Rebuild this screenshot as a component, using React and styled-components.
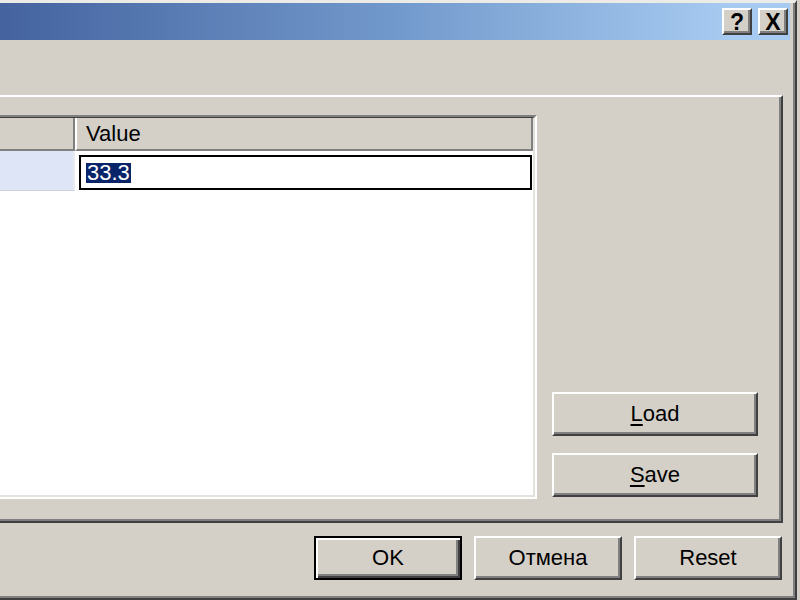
import React from "react";
import styled, { createGlobalStyle } from "styled-components";

const GlobalStyle = createGlobalStyle`
  html, body {
    margin: 0;
    padding: 0;
    background: #d4d0c8;
    overflow: hidden;
  }
  * { box-sizing: border-box; }
`;

const Window = styled.div`
  width: 797px;
  height: 600px;
  background: #d4d0c8;
  border-top: 3px solid #ecebe6;
  border-right: 2px solid #404040;
  border-bottom: 2px solid #404040;
  box-shadow: inset -2px -2px #808080;
  display: flex;
  flex-direction: column;
  font-family: "Liberation Sans", Arial, sans-serif;
  font-size: 22px;
  color: #000;
  overflow: hidden;
`;

const TitleBar = styled.div`
  height: 37px;
  margin-right: 5px;
  padding-right: 2px;
  background: linear-gradient(to right, #44639f 0%, #7299cc 50%, #a6caf0 92%);
  display: flex;
  align-items: center;
  justify-content: flex-end;
  gap: 6px;
`;

const CaptionButton = styled.button`
  width: 30px;
  height: 27px;
  padding: 0;
  background: #d4d0c8;
  border: 2px solid;
  border-color: #fff #404040 #404040 #fff;
  box-shadow: inset -2px -2px #808080;
  font-family: "Liberation Sans", Arial, sans-serif;
  font-weight: bold;
  font-size: 23px;
  line-height: 20px;
  color: #000;
  display: flex;
  align-items: center;
  justify-content: center;
`;

const Panel = styled.div`
  margin-top: 55px;
  width: 783px;
  height: 428px;
  border-top: 2px solid #fff;
  border-right: 2px solid #404040;
  border-bottom: 2px solid #404040;
  box-shadow: inset -2px -2px #808080;
  display: flex;
  padding: 18px 21px 22px 0;
  gap: 15px;
`;

const ListBox = styled.div`
  width: 537px;
  height: 100%;
  border-top: 2px solid #808080;
  border-right: 2px solid #fff;
  border-bottom: 2px solid #fff;
  background: #fff;
  display: flex;
`;

const ListInner = styled.div`
  flex: 1;
  border-top: 1px solid #404040;
  border-right: 2px solid #e4e2dc;
  border-bottom: 2px solid #e4e2dc;
  background: #fff;
  display: flex;
  flex-direction: column;
`;

const GridRow = styled.div`
  display: grid;
  grid-template-columns: 75px 1fr;
  height: ${(p) => p.h}px;
`;

const HeaderCell = styled.div`
  background: #d4d0c8;
  border-bottom: 2px solid #808080;
  border-right: 2px solid #808080;
  border-left: ${(p) => (p.first ? "none" : "2px solid #fff")};
  display: flex;
  align-items: center;
  padding-left: 9px;
`;

const NameCell = styled.div`
  background: #dde5f6;
  border-bottom: 1px solid #cfd3dc;
  border-right: 2px solid #e8ebf2;
`;

const ValueCell = styled.div`
  padding: 4px 0 0 4px;
  background: #fff;
`;

const EditBox = styled.div`
  height: 35px;
  width: 453px;
  border: 2px solid #000;
  background: #fff;
  display: flex;
  align-items: center;
  padding-left: 5px;
`;

const Selected = styled.span`
  background: #0a246a;
  color: #fff;
  line-height: 20px;
  padding: 0 1px;
`;

const SideColumn = styled.div`
  flex: 1;
  display: flex;
  flex-direction: column;
  justify-content: flex-end;
  gap: 17px;
  padding-bottom: 2px;
`;

const Button = styled.button`
  width: ${(p) => p.w}px;
  height: 44px;
  padding: 0;
  background: #d4d0c8;
  border: 2px solid;
  border-color: ${(p) => (p.isDefault ? "#000" : "#fff #404040 #404040 #fff")};
  box-shadow: ${(p) =>
    p.isDefault
      ? "inset 2px 2px #fff, inset -2px -2px #404040, inset -4px -4px #808080"
      : "inset -2px -2px #808080"};
  font-family: "Liberation Sans", Arial, sans-serif;
  font-size: 22px;
  color: #000;
  display: flex;
  align-items: center;
  justify-content: center;
`;

const Key = styled.u`
  text-decoration: underline;
  text-underline-offset: 3px;
  text-decoration-thickness: 2px;
`;

const BottomBar = styled.div`
  margin-top: 13px;
  padding-right: 13px;
  display: flex;
  justify-content: flex-end;
  gap: 12px;
`;

export default function App() {
  return (
    <>
      <GlobalStyle />
      <Window>
        <TitleBar>
          <CaptionButton>?</CaptionButton>
          <CaptionButton>X</CaptionButton>
        </TitleBar>
        <Panel>
          <ListBox>
            <ListInner>
              <GridRow h={33}>
                <HeaderCell first />
                <HeaderCell>Value</HeaderCell>
              </GridRow>
              <GridRow h={40}>
                <NameCell />
                <ValueCell>
                  <EditBox>
                    <Selected>33.3</Selected>
                  </EditBox>
                </ValueCell>
              </GridRow>
            </ListInner>
          </ListBox>
          <SideColumn>
            <Button w={206}>
              <Key>L</Key>oad
            </Button>
            <Button w={206}>
              <Key>S</Key>ave
            </Button>
          </SideColumn>
        </Panel>
        <BottomBar>
          <Button w={148} isDefault>
            OK
          </Button>
          <Button w={148}>Отмена</Button>
          <Button w={148}>Reset</Button>
        </BottomBar>
      </Window>
    </>
  );
}
